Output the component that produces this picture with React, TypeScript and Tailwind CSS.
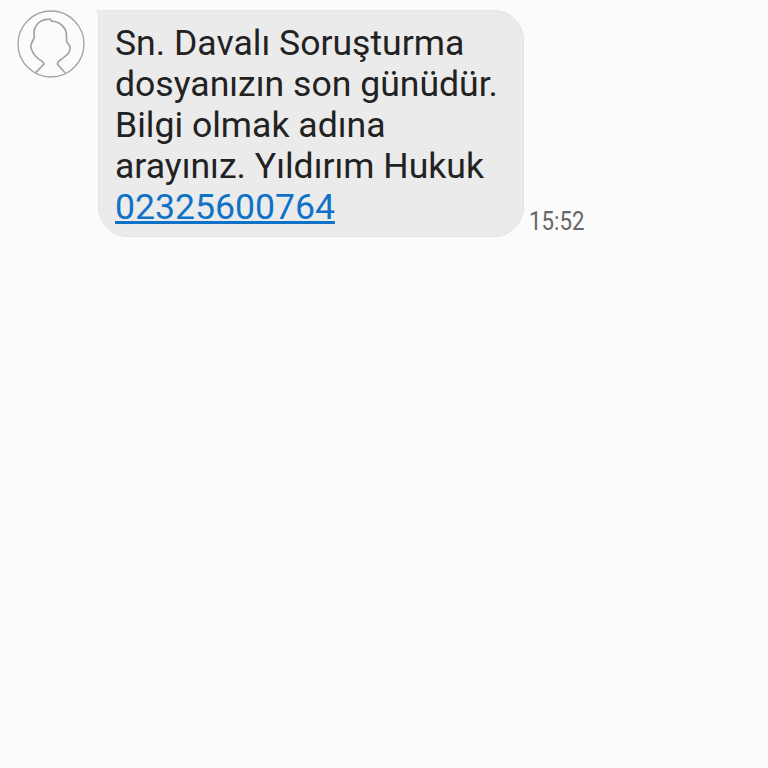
export default function App() {
  return (
    <div className="min-h-[768px] w-[768px] bg-[#fbfbfb] font-['Roboto',sans-serif]">
      <div className="flex items-start pl-[17px] pt-[10px]">
        <svg width="68" height="68" viewBox="0 0 68 68" fill="none" className="shrink-0">
          <circle cx="34" cy="34" r="33" stroke="#a3a3a3" strokeWidth="1.3" />
          <path
            d="M18.7 62.7 L27 54 L25.7 51.7 C22 49 18 47 16.3 43 C14.5 40 13.5 37.5 14 35 C14.5 32 17 30 17.3 26.7 C16.8 23 16.5 21 18 18 C19.5 14 22 12 24.7 10.7 C27.5 9.5 30 9.5 33 9 L34.7 11.3 C37.5 11 40 12 42.3 13.3 C45.5 15.5 48 18.5 49 21.7 C50 25 49 28.5 49.7 31.7 C50.5 33.5 52.5 34.5 53 36.7 C53.5 39 52.5 41.5 51.3 43.3 C48.5 47 44 49 41.3 51.7 L40.3 54 L48 62.7"
            stroke="#a3a3a3"
            strokeWidth="1.7"
            strokeLinejoin="round"
          />
        </svg>
        <div className="relative ml-[13px] h-[227px] w-[426px] shrink-0 rounded-[30px] rounded-tl-none border border-[#e3e3e3] bg-[#ebebeb] pl-[16px] pt-[12px] text-[35.6px] leading-[41px] text-[#222222]">
          <svg width="9" height="18" viewBox="0 0 9 18" className="absolute -left-[4px] -top-px">
            <path d="M0 0 H9 V18 C7.5 10 4.5 4 0 0 Z" fill="#ebebeb" />
          </svg>
          <p className="whitespace-nowrap">
            Sn. Davalı Soruşturma
            <br />
            dosyanızın son günüdür.
            <br />
            Bilgi olmak adına
            <br />
            arayınız. Yıldırım Hukuk
            <br />
            <a href="#" className="text-[#0f72c6] underline">
              02325600764
            </a>
          </p>
        </div>
        <span className="ml-[5px] mt-[197px] origin-left scale-x-[0.89] text-[25px] leading-[30px] text-[#666666]">15:52</span>
      </div>
    </div>
  );
}
